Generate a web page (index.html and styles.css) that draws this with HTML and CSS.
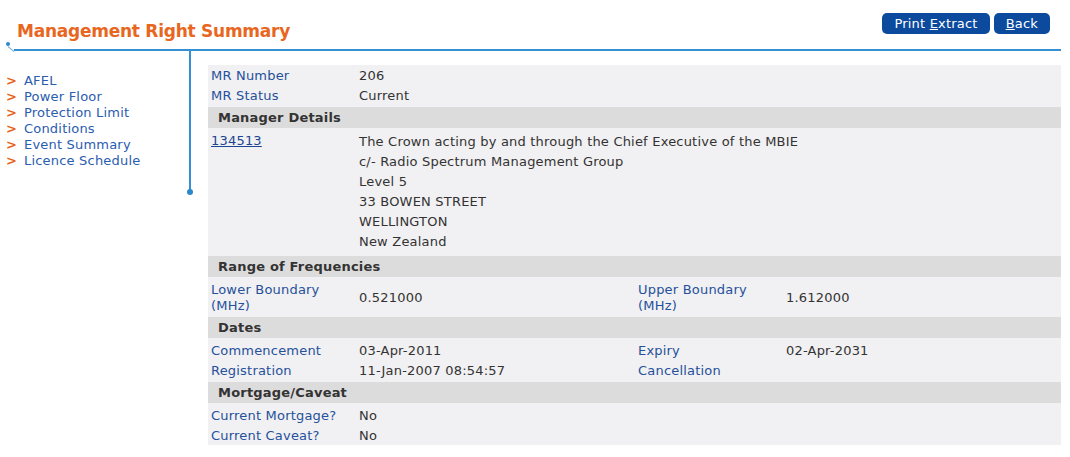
FILE: index.html
```html
<!DOCTYPE html>
<html lang="en">
<head>
<meta charset="utf-8">
<title>Management Right Summary</title>
<link rel="stylesheet" href="styles.css">
</head>
<body>
<header class="topbar">
  <h1 class="title">Management Right Summary</h1>
  <div class="actions">
    <button class="btn" type="button">Print <u>E</u>xtract</button>
    <button class="btn" type="button"><u>B</u>ack</button>
  </div>
</header>
<div class="rule"></div>
<div class="main">
  <nav class="sidebar">
    <ul class="nav">
      <li><span class="chev">&gt;</span><a href="#">AFEL</a></li>
      <li><span class="chev">&gt;</span><a href="#">Power Floor</a></li>
      <li><span class="chev">&gt;</span><a href="#">Protection Limit</a></li>
      <li><span class="chev">&gt;</span><a href="#">Conditions</a></li>
      <li><span class="chev">&gt;</span><a href="#">Event Summary</a></li>
      <li><span class="chev">&gt;</span><a href="#">Licence Schedule</a></li>
    </ul>
  </nav>
  <section class="panel">
    <div class="row"><div class="lbl">MR Number</div><div class="val">206</div></div>
    <div class="row"><div class="lbl">MR Status</div><div class="val">Current</div></div>
    <div class="head">Manager Details</div>
    <div class="row addr"><div class="lbl"><a href="#" class="link">134513</a></div>
      <div class="val wide">The Crown acting by and through the Chief Executive of the MBIE<br>c/- Radio Spectrum Management Group<br>Level 5<br>33 BOWEN STREET<br>WELLINGTON<br>New Zealand</div></div>
    <div class="head">Range of Frequencies</div>
    <div class="row tall"><div class="lbl">Lower Boundary<br>(MHz)</div><div class="val">0.521000</div><div class="lbl">Upper Boundary<br>(MHz)</div><div class="val">1.612000</div></div>
    <div class="head">Dates</div>
    <div class="row"><div class="lbl">Commencement</div><div class="val">03-Apr-2011</div><div class="lbl">Expiry</div><div class="val">02-Apr-2031</div></div>
    <div class="row"><div class="lbl">Registration</div><div class="val">11-Jan-2007 08:54:57</div><div class="lbl">Cancellation</div><div class="val"></div></div>
    <div class="head">Mortgage/Caveat</div>
    <div class="row"><div class="lbl">Current Mortgage?</div><div class="val">No</div></div>
    <div class="row"><div class="lbl">Current Caveat?</div><div class="val">No</div></div>
  </section>
</div>
</body>
</html>
```
FILE: styles.css
```css
* { box-sizing: border-box; }
body {
  margin: 0;
  font-family: "DejaVu Sans", Verdana, sans-serif;
  font-size: 13px;
  letter-spacing: 0.2px;
  color: #333;
  background: #fff;
}
.topbar {
  display: flex;
  justify-content: space-between;
  align-items: flex-start;
  height: 49px;
  padding: 13px 20px 0 17px;
}
.title {
  margin: 7px 0 0;
  font-size: 17px;
  font-weight: bold;
  letter-spacing: -0.25px;
  color: #e8661e;
  line-height: 22px;
}
.actions { display: flex; gap: 4px; }
.btn {
  font-family: "DejaVu Sans", Verdana, sans-serif;
  font-size: 13px;
  letter-spacing: 0.2px;
  color: #fff;
  background: #0c4a9e;
  border: none;
  border-radius: 5px;
  height: 21px;
  padding: 0 12px;
  line-height: 21px;
}
.btn u { text-decoration: underline; }
.rule {
  position: relative;
  margin-left: 14px;
  width: 1047px;
  height: 2px;
  background: #3490d2;
}
.rule::before {
  content: "";
  position: absolute;
  left: -8px;
  top: -7px;
  width: 4px;
  height: 4px;
  border-radius: 50%;
  background: #2a88cc;
}
.rule::after {
  content: "";
  position: absolute;
  left: -6px;
  top: -3px;
  width: 8px;
  height: 1px;
  background: #7ab4e0;
  transform: rotate(40deg);
  transform-origin: left center;
}
.main { display: flex; align-items: flex-start; }
.sidebar {
  position: relative;
  width: 191px;
  height: 141px;
  border-right: 2px solid #3490d2;
  padding-top: 22px;
}
.sidebar::after {
  content: "";
  position: absolute;
  right: -4px;
  bottom: -3px;
  width: 6px;
  height: 6px;
  border-radius: 50%;
  background: #2a88cc;
}
.nav { list-style: none; margin: 0; padding: 0 0 0 6px; }
.nav li { display: flex; line-height: 16px; height: 16px; }
.chev {
  width: 18px;
  color: #e8661e;
  font-weight: bold;
}
.nav a { color: #2a5caf; text-decoration: none; }
.panel {
  margin: 14px 0 0 17px;
  width: 853px;
  background: #f1f0f2;
}
.row {
  display: grid;
  grid-template-columns: 148px 279px 148px 278px;
  height: 20px;
  line-height: 22px;
}
.lbl { color: #25509b; padding-left: 3px; white-space: nowrap; }
.val { color: #333; padding-left: 3px; white-space: nowrap; }
.wide { grid-column: span 3; }
.addr { height: 124px; padding: 2px 0; line-height: 20px; }
.addr .lbl { margin-top: -1px; }
.link { color: #1c4592; text-decoration: underline; }
.tall { height: 36px; line-height: 16px; align-items: center; }
.tall > div { padding-top: 1px; }
.head {
  height: 21px;
  line-height: 21px;
  margin: 2px 0;
  padding-left: 10px;
  background: #dddcdd;
  font-weight: bold;
  color: #333;
}
```
